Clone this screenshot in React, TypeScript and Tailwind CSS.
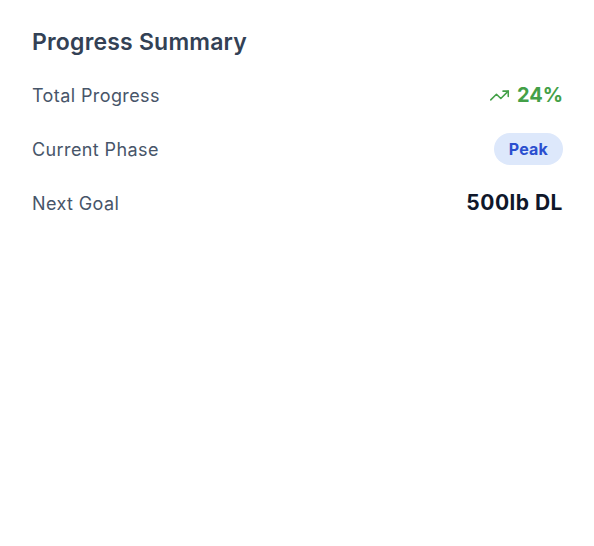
import { TrendingUp } from "lucide-react";

const ROWS = [
  { label: "Total Progress", kind: "progress" },
  { label: "Current Phase", kind: "phase" },
  { label: "Next Goal", kind: "goal" },
];

export default function App() {
  return (
    <div
      className="min-h-[546px] w-full bg-white pt-[26px] pr-[31px] pl-8"
      style={{ fontFamily: "Inter, 'Noto Sans', sans-serif" }}
    >
      <h2 className="text-[23px] leading-8 font-semibold tracking-[0.2px] text-[#334155]">
        Progress Summary
      </h2>
      <div className="mt-[10px] flex flex-col">
        {ROWS.map((r) => (
          <div key={r.label} className="flex h-[54px] items-center justify-between">
            <span className="text-[18px] tracking-[0.4px] text-[#475569]">{r.label}</span>
            {r.kind === "progress" && (
              <span className="flex items-center gap-[7px] text-[20px] font-bold text-[#43a047]">
                <TrendingUp size={21} strokeWidth={1.75} />
                24%
              </span>
            )}
            {r.kind === "phase" && (
              <span className="rounded-full bg-[#dde8fb] px-[15px] py-[4px] text-[16px] font-bold tracking-[0.2px] text-[#2b4fcf]">
                Peak
              </span>
            )}
            {r.kind === "goal" && (
              <span className="text-[21px] font-bold tracking-[0.5px] text-[#0f172a]">500lb DL</span>
            )}
          </div>
        ))}
      </div>
    </div>
  );
}
